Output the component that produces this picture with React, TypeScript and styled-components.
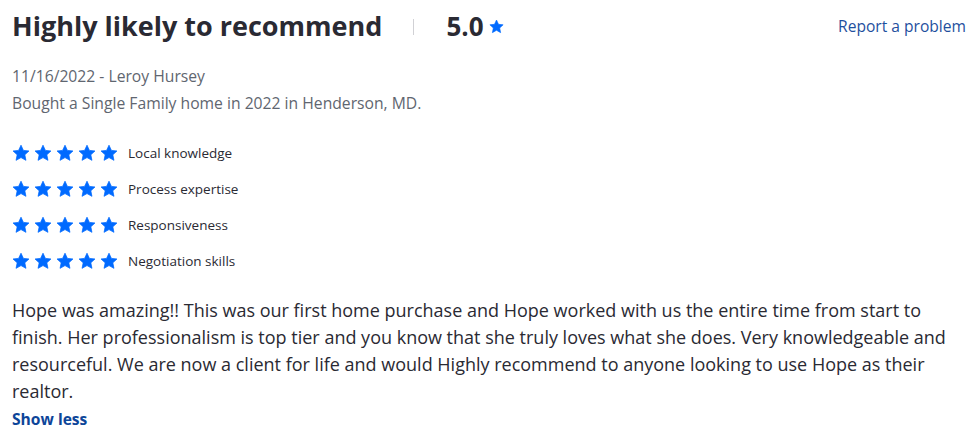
import styled, { createGlobalStyle } from "styled-components";

const GlobalStyle = createGlobalStyle`
  body {
    margin: 0;
    background: #fff;
    font-family: "Open Sans", "Noto Sans", sans-serif;
    color: #2a2a33;
  }
`;

const categories = [
  "Local knowledge",
  "Process expertise",
  "Responsiveness",
  "Negotiation skills",
];

function Star({ size }: { size: number }) {
  return (
    <svg width={size} height={size} viewBox="0 0 24 24">
      <path
        fill="#006aff"
        stroke="#006aff"
        strokeWidth="1"
        strokeLinejoin="round"
        d="M12 1.6l3.2 6.9 7.4.8-5.5 5.1 1.5 7.4L12 18.1l-6.6 3.7 1.5-7.4L1.4 9.3l7.4-.8z"
      />
    </svg>
  );
}

function App() {
  return (
    <Card>
      <GlobalStyle />
      <Header>
        <TitleGroup>
          <Title>Highly likely to recommend</Title>
          <Divider />
          <Score>5.0</Score>
          <Star size={15} />
        </TitleGroup>
        <ReportLink href="#">Report a problem</ReportLink>
      </Header>

      <Meta>
        <MetaLine>11/16/2022 - Leroy Hursey</MetaLine>
        <MetaLine>Bought a Single Family home in 2022 in Henderson, MD.</MetaLine>
      </Meta>

      <Ratings>
        {categories.map((c) => (
          <RatingRow key={c}>
            <Stars>
              {[0, 1, 2, 3, 4].map((i) => (
                <Star key={i} size={18} />
              ))}
            </Stars>
            <RatingLabel>{c}</RatingLabel>
          </RatingRow>
        ))}
      </Ratings>

      <Body>
        Hope was amazing!! This was our first home purchase and Hope worked with us the entire
        time from start to finish. Her professionalism is top tier and you know that she truly
        loves what she does. Very knowledgeable and resourceful. We are now a client for life and
        would Highly recommend to anyone looking to use Hope as their realtor.
      </Body>
      <ShowLess>Show less</ShowLess>
    </Card>
  );
}

const Card = styled.div`
  padding: 6px 10px 0 12px;
  width: 976px;
  box-sizing: border-box;
`;

const Header = styled.div`
  display: flex;
  align-items: center;
  justify-content: space-between;
  height: 40px;
`;

const TitleGroup = styled.div`
  display: flex;
  align-items: center;
`;

const Title = styled.h2`
  margin: 0;
  font-size: 27px;
  font-weight: 700;
  line-height: 40px;
  color: #2a2a33;
`;

const Divider = styled.span`
  width: 1px;
  height: 16px;
  background: #d1d1d5;
  margin: 2px 32px 0 31px;
`;

const Score = styled.span`
  font-size: 26px;
  font-weight: 700;
  color: #2a2a33;
  margin-right: 5px;
`;

const ReportLink = styled.a`
  font-size: 15.6px;
  color: #1f4f9e;
  text-decoration: none;
`;

const Meta = styled.div`
  margin-top: 17px;
  display: flex;
  flex-direction: column;
`;

const MetaLine = styled.div`
  font-size: 15.7px;
  line-height: 27px;
  color: #5f6670;
`;

const Ratings = styled.div`
  margin-top: 18px;
  display: flex;
  flex-direction: column;
`;

const RatingRow = styled.div`
  display: flex;
  align-items: center;
  height: 36px;
`;

const Stars = styled.div`
  display: flex;
  gap: 4px;
  margin-right: 10px;
`;

const RatingLabel = styled.span`
  font-size: 13.5px;
  color: #2a2a33;
`;

const Body = styled.p`
  margin: 18px 0 0;
  font-size: 18px;
  line-height: 27px;
  color: #2a2a33;
`;

const ShowLess = styled.a`
  display: block;
  font-size: 15.6px;
  font-weight: 700;
  line-height: 28px;
  color: #0d4599;
  cursor: pointer;
`;

export default App;
